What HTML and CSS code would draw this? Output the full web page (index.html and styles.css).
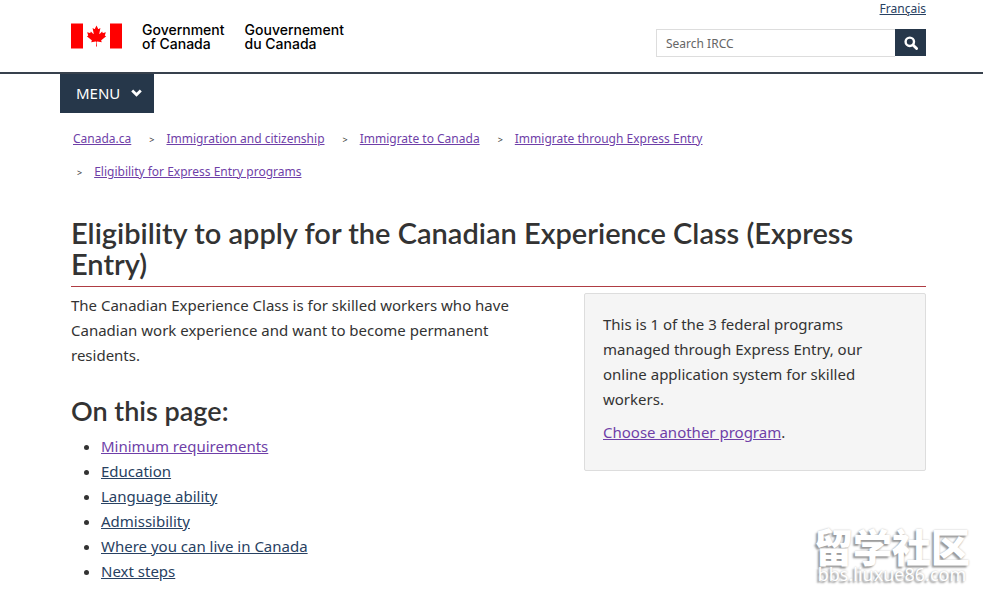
FILE: index.html
```
<!DOCTYPE html>
<html lang="en">
<head>
    <meta charset="UTF-8">
    <meta name="viewport" content="width=device-width, initial-scale=1.0">
    <title>Eligibility to apply for the Canadian Experience Class (Express Entry)</title>
    <link rel="stylesheet" href="styles.css">
</head>
<body>
    <header>
        <div class="container header-row">
            <a class="brand" href="#">
                <svg class="flag" viewBox="0 0 51 25" aria-hidden="true">
                    <path fill="#f00" d="M0 0h12v25H0zM39 0h12v25H39z"/>
                    <path fill="#f00" transform="translate(25.5 12.4) scale(.0052)" d="m-90 2030 45-863a95 95 0 0 0-111-98l-859 151 116-320a65 65 0 0 0-20-73l-941-762 212-99a65 65 0 0 0 34-79l-186-572 542 115a65 65 0 0 0 73-38l105-247 423 454a65 65 0 0 0 111-57l-204-1052 327 189a65 65 0 0 0 91-27l332-652 332 652a65 65 0 0 0 91 27l327-189-204 1052a65 65 0 0 0 111 57l423-454 105 247a65 65 0 0 0 73 38l542-115-186 572a65 65 0 0 0 34 79l212 99-941 762a65 65 0 0 0-20 73l116 320-859-151a95 95 0 0 0-111 98l45 863z"/>
                </svg>
                <span>Government<br>of Canada</span>
                <span lang="fr">Gouvernement<br>du Canada</span>
            </a>
            <div class="header-tools">
                <a class="lang" href="#" lang="fr">Français</a>
                <form class="search">
                    <input type="search" id="search" placeholder="Search IRCC" aria-label="Search IRCC">
                    <button type="submit" aria-label="Search">
                        <svg viewBox="0 0 14 14" width="14" height="14" aria-hidden="true">
                            <circle cx="5.8" cy="5.8" r="4.2" fill="none" stroke="#fff" stroke-width="2.4"/>
                            <path d="M9 9l3.6 3.6" stroke="#fff" stroke-width="2.8" stroke-linecap="round"/>
                        </svg>
                    </button>
                </form>
            </div>
        </div>
    </header>

    <nav class="container menu">
        <button type="button">MENU
            <svg viewBox="0 0 11 8" width="11" height="8" aria-hidden="true">
                <path d="M1.2 1.5l4.3 4.2 4.3-4.2" fill="none" stroke="#fff" stroke-width="2.8"/>
            </svg>
        </button>
    </nav>

    <nav class="container" aria-label="Breadcrumb">
        <ol class="breadcrumb">
            <li><a href="#">Canada.ca</a></li>
            <li><a href="#">Immigration and citizenship</a></li>
            <li><a href="#">Immigrate to Canada</a></li>
            <li><a href="#">Immigrate through Express Entry</a></li>
            <li><a href="#">Eligibility for Express Entry programs</a></li>
        </ol>
    </nav>

    <main class="container">
        <h1>Eligibility to apply for the Canadian Experience Class (Express Entry)</h1>
        <div class="columns">
            <div class="content">
                <p>The Canadian Experience Class is for skilled workers who have Canadian work experience and want to become permanent residents.</p>
                <h2>On this page:</h2>
                <ul>
                    <li><a class="visited" href="#">Minimum requirements</a></li>
                    <li><a href="#">Education</a></li>
                    <li><a href="#">Language ability</a></li>
                    <li><a href="#">Admissibility</a></li>
                    <li><a href="#">Where you can live in Canada</a></li>
                    <li><a href="#">Next steps</a></li>
                </ul>
            </div>
            <aside class="well">
                <p>This is 1 of the 3 federal programs managed through Express Entry, our online application system for skilled workers.</p>
                <p><a class="visited" href="#">Choose another program</a>.</p>
            </aside>
        </div>
    </main>

    <div class="watermark">
        <strong lang="zh">留学社区</strong>
        <span>bbs.liuxue86.com</span>
    </div>
</body>
</html>
```

FILE: styles.css
```
* {
    box-sizing: border-box;
}

body {
    margin: 0;
    background: #fff;
    color: #333;
    font-family: "Noto Sans", sans-serif;
    font-size: 15px;
    line-height: 25px;
}

a {
    color: #284162;
}

.visited,
.breadcrumb a {
    color: #6f3fa8;
}

.container {
    padding: 0 57px 0 71px;
}

header {
    border-bottom: 2px solid #38414d;
}

.header-row {
    display: flex;
    justify-content: space-between;
    padding-bottom: 15px;
}

.brand {
    display: flex;
    align-items: flex-start;
    gap: 20px;
    padding-top: 23px;
    color: #000;
    font: 500 14px/14px Inter, "Liberation Sans", sans-serif;
    text-decoration: none;
}

.flag {
    width: 51px;
    height: 26px;
}

.header-tools {
    display: flex;
    flex-direction: column;
    align-items: flex-end;
    gap: 11px;
    width: 270px;
}

.lang {
    font-size: 12px;
    line-height: 18px;
}

.search {
    display: flex;
    width: 100%;
    height: 28px;
}

.search input {
    flex: 1;
    min-width: 0;
    padding: 0 9px;
    border: 1px solid #ddd;
    border-right: 0;
    border-radius: 0;
    font: 12px "Noto Sans", sans-serif;
    appearance: none;
}

.search input::placeholder {
    color: #666;
}

.search button {
    display: flex;
    align-items: center;
    justify-content: center;
    width: 31px;
    height: 27px;
    padding: 0;
    border: 0;
    background: #26374a;
}

.menu {
    padding-left: 60px;
}

.menu button {
    display: flex;
    align-items: center;
    gap: 11px;
    height: 39px;
    padding: 0 12px 1px 16px;
    border: 0;
    background: #26374a;
    color: #fff;
    font: 15px "Noto Sans", sans-serif;
}

.breadcrumb {
    display: flex;
    flex-wrap: wrap;
    margin: 10px 0 0;
    padding: 0 0 0 2px;
    list-style: none;
    font-size: 12px;
    line-height: 32px;
}

.breadcrumb li {
    margin-right: 14px;
}

.breadcrumb li + li::before {
    content: ">";
    margin: 0 12px 0 4px;
    font-size: 9px;
}

h1,
h2 {
    font-family: Lato, sans-serif;
    font-weight: 600;
}

h1 {
    margin: 28px 0 6px;
    padding-bottom: 7px;
    border-bottom: 1px solid #af3c43;
    font-size: 29px;
    line-height: 31px;
}

h2 {
    margin: 28px 0 8px;
    font-size: 27px;
    line-height: 30px;
}

.columns {
    display: grid;
    grid-template-columns: 3fr 2fr;
    align-items: start;
}

.content {
    padding-right: 60px;
}

p {
    margin: 0;
}

ul {
    margin: 0;
    padding-left: 30px;
}

.well {
    padding: 18px 18px 25px;
    border: 1px solid #ddd;
    border-radius: 2px;
    background: #f5f5f5;
}

.well p + p {
    margin-top: 8px;
}

.watermark {
    position: absolute;
    right: 13px;
    bottom: 12px;
    display: flex;
    flex-direction: column;
    align-items: center;
    color: #fff;
    text-shadow: -2px 2px 2px #999, 0 0 2px #bbb;
    pointer-events: none;
}

.watermark strong {
    font: 900 39px/38px "Noto Sans CJK SC", sans-serif;
}

.watermark span {
    font-size: 18px;
    line-height: 20px;
}
```
